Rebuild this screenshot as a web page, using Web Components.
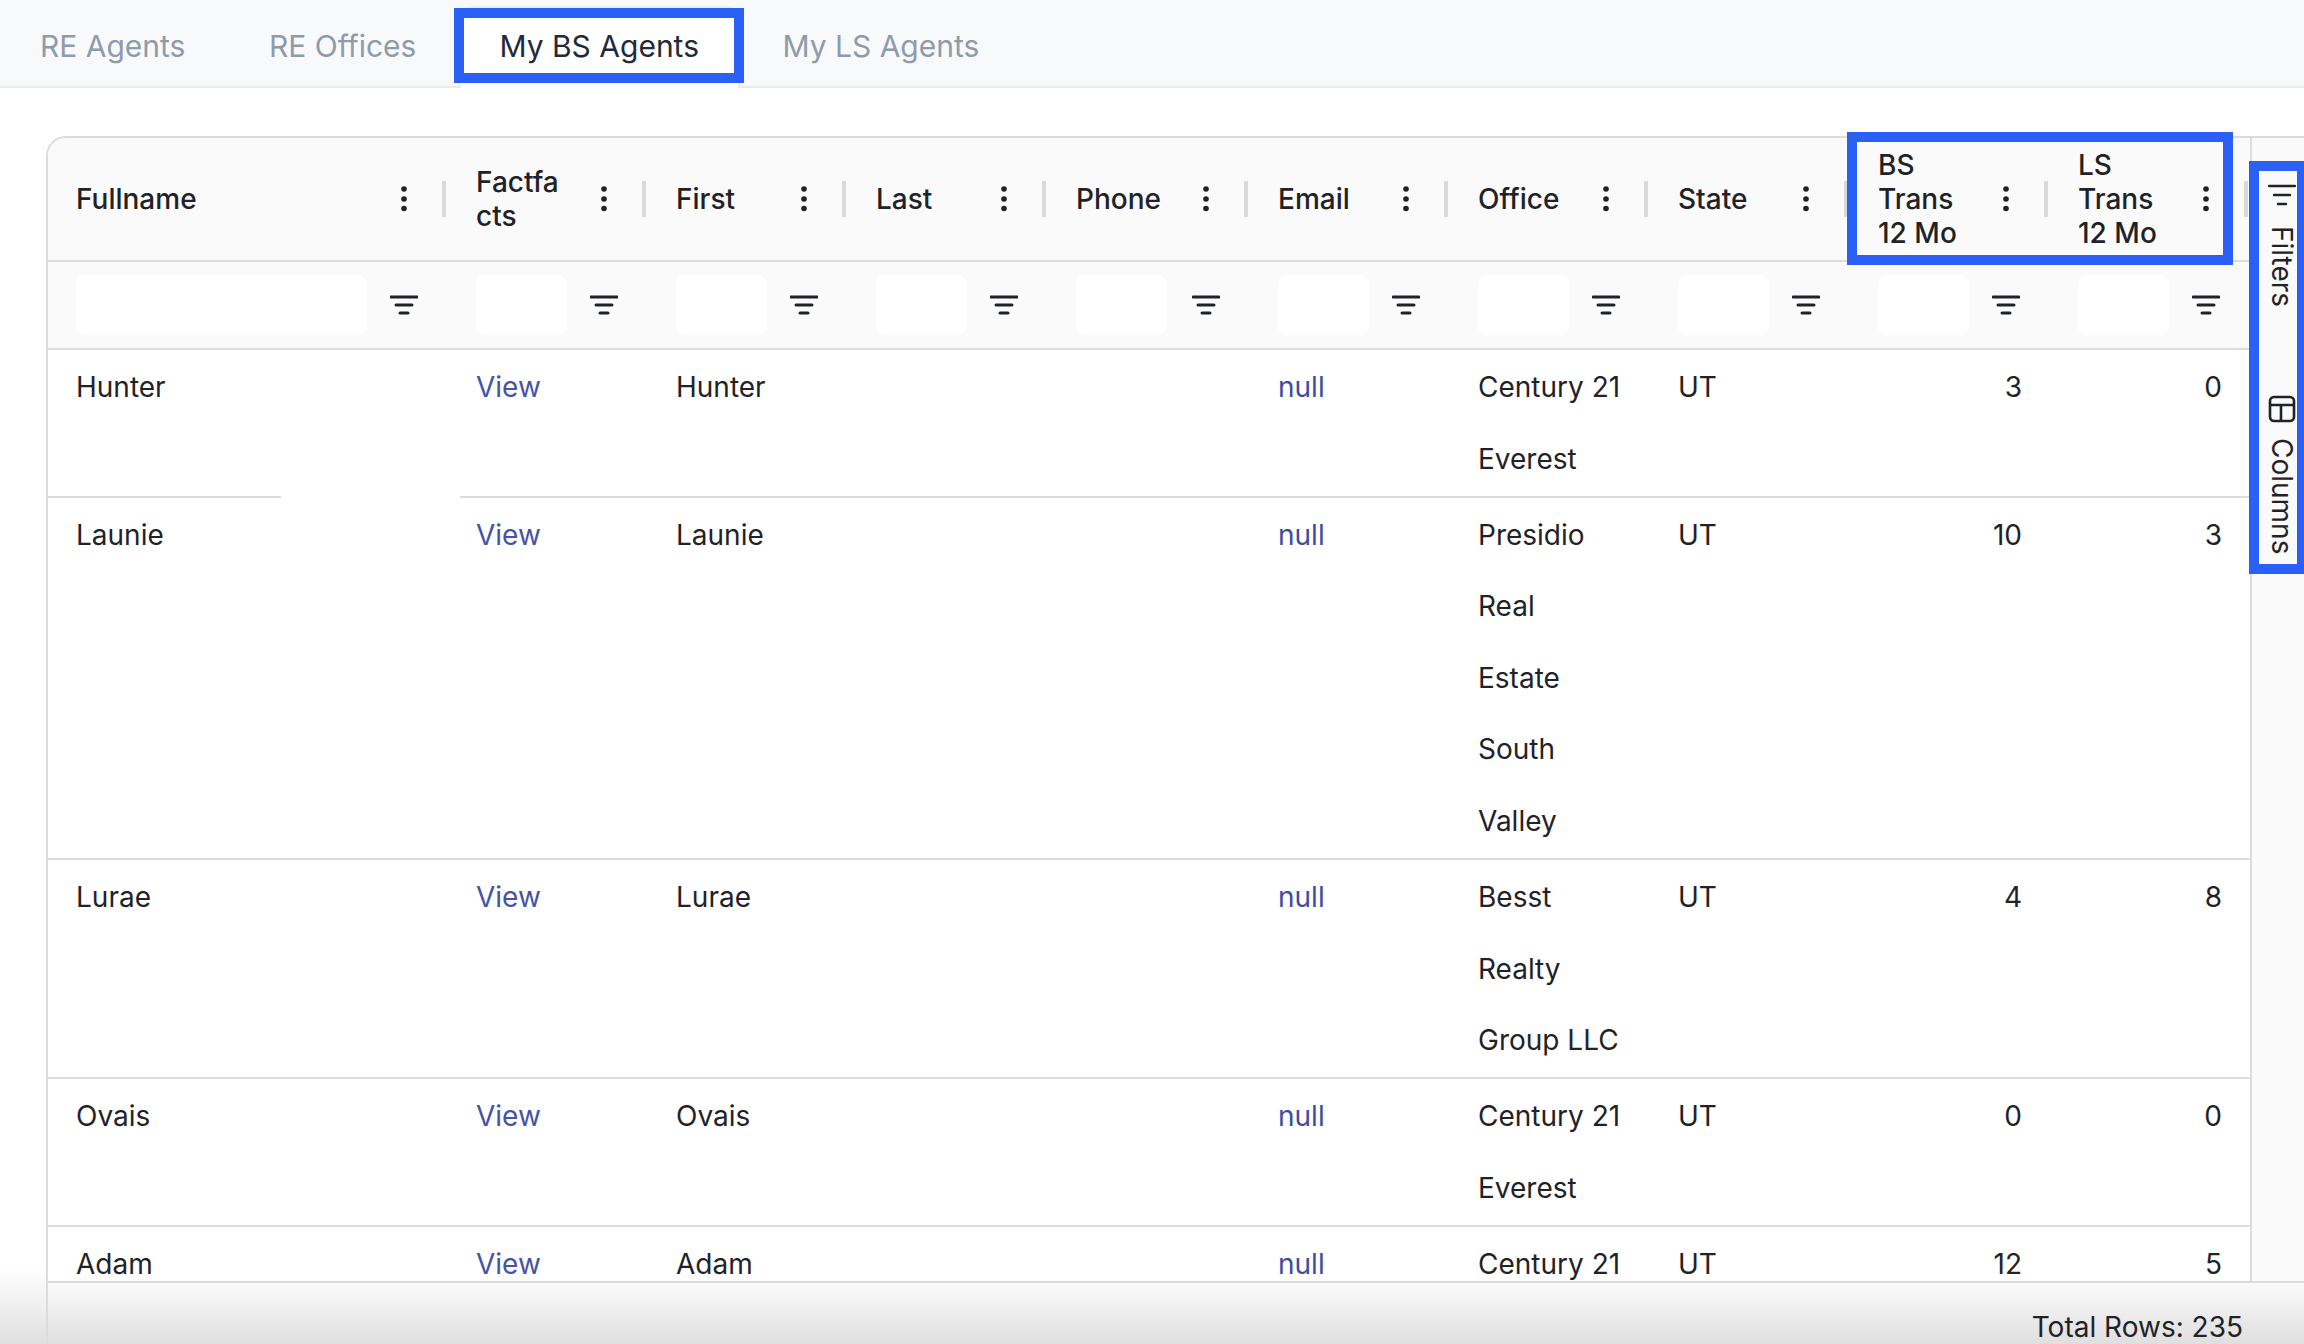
<!DOCTYPE html>
<html lang="en"><head><meta charset="utf-8"><title>My BS Agents</title>
<style>
html,body{margin:0;padding:0;height:1344px;overflow:hidden;background:#fff;font-family:Inter,"Liberation Sans",sans-serif;}
</style></head>
<body>
<agent-app></agent-app>
<script>
const COLS='400px 200px 200px 200px 202px 200px 200px 200px 200px 200px';
const ICON_DOTS='<svg width="8" height="28" viewBox="0 0 8 28"><circle cx="4" cy="4" r="2.8" fill="#1f2328"/><circle cx="4" cy="14" r="2.8" fill="#1f2328"/><circle cx="4" cy="23.5" r="2.8" fill="#1f2328"/></svg>';
const ICON_FILTER='<svg width="28" height="22" viewBox="0 0 28 22"><path d="M1 3H27M6 11H22M10 19H18" stroke="#1f2328" stroke-width="3" stroke-linecap="round" fill="none"/></svg>';

class TabItem extends HTMLElement{
  constructor(){super();this.attachShadow({mode:'open'}).innerHTML=`<style>
  :host{display:flex;align-items:center;box-sizing:border-box;height:100%;padding:0 42.5px;font-size:30px;color:#8f9bab;white-space:nowrap}
  :host([active]){background:#fff;color:#1f2a3a;border:2px solid #eceef2;border-bottom:0;border-radius:14px 14px 0 0;margin-bottom:-2px;height:calc(100% + 2px);padding:0 39px 4px 38.5px}
  </style><span><slot></slot></span>`;}
}
customElements.define('tab-item',TabItem);

class TabBar extends HTMLElement{
  constructor(){super();this.attachShadow({mode:'open'}).innerHTML=`<style>
  :host{display:block;height:88px;box-sizing:border-box;background:#f8f9fb;border-bottom:2px solid #e9ebef;padding-top:6px}
  .row{display:flex;height:80px}
  </style><div class="row"><slot></slot></div>`;}
}
customElements.define('tab-bar',TabBar);

class HeadCell extends HTMLElement{
  constructor(){super();this.attachShadow({mode:'open'}).innerHTML=`<style>
  :host{display:block;position:relative;box-sizing:border-box;height:122px}
  .in{display:flex;align-items:center;height:100%;padding-left:28px;}
  .t{width:91px;font-size:28px;line-height:34px;font-weight:500;color:#1f2328;overflow-wrap:anywhere}
  :host([wide]) .t{width:290px}
  .d{position:absolute;right:40px;top:47px;width:8px;height:28px}
  .sep{position:absolute;right:2px;top:43px;width:4px;height:36px;background:#d9d9d9}
  </style><div class="in"><div class="t"><slot></slot></div></div><div class="d">${ICON_DOTS}</div><div class="sep"></div>`;}
}
customElements.define('head-cell',HeadCell);

class FilterCell extends HTMLElement{
  constructor(){super();this.attachShadow({mode:'open'}).innerHTML=`<style>
  :host{display:block;position:relative;box-sizing:border-box;height:86px;padding:13px 0 0 28px}
  input{display:block;box-sizing:border-box;width:91px;height:60px;border:0;border-radius:9px;background:#fff;padding:0;margin:0;outline:0}
  :host([wide]) input{width:291px}
  .f{position:absolute;right:30px;top:32px;width:28px;height:22px}
  </style><input type="text" aria-label="Filter"><div class="f">${ICON_FILTER}</div>`;}
}
customElements.define('filter-cell',FilterCell);

class GridRow extends HTMLElement{
  constructor(){super();this.attachShadow({mode:'open'});}
  connectedCallback(){
    const d=JSON.parse(this.getAttribute('data'));
    const cells=[
      `<div class="c">${d[0]}</div>`,`<div class="c"><span class="l">View</span></div>`,`<div class="c">${d[0]}</div>`,
      `<div class="c"></div>`,`<div class="c"></div>`,`<div class="c"><span class="n">null</span></div>`,
      `<div class="c o">${d[1]}</div>`,`<div class="c">UT</div>`,`<div class="c r">${d[2]}</div>`,`<div class="c r">${d[3]}</div>`].join('');
    this.shadowRoot.innerHTML=`<style>
    :host{display:grid;grid-template-columns:${COLS};position:relative;box-sizing:border-box;border-bottom:2px solid #dcdcdc;background:#fff;font-size:28px;line-height:71.6px;color:#1f2328}
    .c{padding:2px 28px .4px;box-sizing:border-box;min-width:0}
    .o{padding-right:0;}
    .r{text-align:right}
    .l{color:#4653a5}.n{color:#3f4ba0}
    .gap{position:absolute;left:233px;width:179px;bottom:-2px;height:2px;background:#fff}
    </style>${cells}${this.hasAttribute('gap')?'<div class="gap"></div>':''}`;
  }
}
customElements.define('grid-row',GridRow);

class DataGrid extends HTMLElement{
  constructor(){
    super();
    const heads=['Fullname','Factfacts','First','Last','Phone','Email','Office','State','BS Trans 12 Mo','LS Trans 12 Mo'];
    const rows=[
      ['Hunter','Century 21<br>Everest',3,0],
      ['Launie','Presidio<br>Real<br>Estate<br>South<br>Valley',10,3],
      ['Lurae','Besst<br>Realty<br>Group LLC',4,8],
      ['Ovais','Century 21<br>Everest',0,0],
      ['Adam','Century 21',12,5]];
    const hs=heads.map((h,i)=>`<head-cell ${i?'':'wide'}>${h}</head-cell>`).join('');
    const fs=heads.map((h,i)=>`<filter-cell ${i?'':'wide'}></filter-cell>`).join('');
    const rs=rows.map((r,i)=>`<grid-row ${i==0?'gap':''} data='${JSON.stringify(r)}'></grid-row>`).join('');
    this.attachShadow({mode:'open'}).innerHTML=`<style>
    :host{display:block;flex:none;width:2202px;overflow:hidden;border-right:2px solid #dcdcdc;box-sizing:content-box}
    .h{display:grid;grid-template-columns:${COLS};background:#fafafa;border-bottom:2px solid #dcdcdc}
    </style><div class="h">${hs}</div><div class="h">${fs}</div>${rs}`;
  }
}
customElements.define('data-grid',DataGrid);

class SideBar extends HTMLElement{
  constructor(){super();this.attachShadow({mode:'open'}).innerHTML=`<style>
  :host{display:flex;flex-direction:column;align-items:center;flex:1;background:#fafafa;box-sizing:border-box;padding:46px 7px 0 15px;color:#1f2328;font-size:28px}
  .b{display:flex;flex-direction:column;align-items:center}
  .v{writing-mode:vertical-rl;line-height:30px}
  .b1 .v{margin-top:20px}
  .b2{margin-top:88px}
  .b2 .v{margin-top:15px}
  svg{display:block}
  </style>
  <div class="b b1"><svg width="28" height="22" viewBox="0 0 28 22"><path d="M1 2H27M6 11H22M10 20H18" stroke="#1f2328" stroke-width="2.4" stroke-linecap="round" fill="none"/></svg><div class="v">Filters</div></div>
  <div class="b b2"><svg width="28" height="28" viewBox="0 0 28 28"><rect x="2" y="2" width="24" height="24" rx="4" stroke="#1f2328" stroke-width="2.6" fill="none"/><path d="M2 10H26M13 10V26" stroke="#1f2328" stroke-width="2.6" fill="none"/></svg><div class="v">Columns</div></div>`;}
}
customElements.define('side-bar',SideBar);

class AnnotationBox extends HTMLElement{
  constructor(){super();this.attachShadow({mode:'open'}).innerHTML=`<style>
  :host{display:block;position:absolute;box-sizing:border-box;border:10px solid #2b60f5;pointer-events:none}
  </style>`;}
}
customElements.define('annotation-box',AnnotationBox);

class AgentApp extends HTMLElement{
  constructor(){super();this.attachShadow({mode:'open'}).innerHTML=`<style>
  :host{display:block;position:relative;width:2304px;height:1344px;overflow:hidden;font-family:Inter,"Liberation Sans",sans-serif}
  .main{box-sizing:border-box;height:1256px;padding:48px 0 0 46px;background:linear-gradient(to bottom,#fff 0,#fff 1180px,#dfdfdf 100%)}
  .card{box-sizing:border-box;height:100%;border:2px solid #dcdcdc;border-right:0;border-bottom:0;border-top-left-radius:20px;display:flex;flex-direction:column;overflow:hidden;background:#fff}
  .top{flex:1;min-height:0;display:flex}
  .foot{flex:none;height:63px;box-sizing:border-box;border-top:2px solid #dcdcdc;background:linear-gradient(to bottom,#fafafa,#dfdfdf);display:flex;justify-content:flex-end;padding:27px 61px 0 0;font-size:28px;line-height:34px;color:#1f2328}
  </style>
  <tab-bar><tab-item style="margin-left:-2.5px">RE Agents</tab-item><tab-item style="margin-left:-1.5px">RE Offices</tab-item><tab-item active>My BS Agents</tab-item><tab-item>My LS Agents</tab-item></tab-bar>
  <div class="main"><div class="card"><div class="top"><data-grid></data-grid><side-bar></side-bar></div><div class="foot">Total Rows: 235</div></div></div>
  <annotation-box style="left:454px;top:8px;width:290px;height:75px"></annotation-box>
  <annotation-box style="left:1847px;top:132px;width:386px;height:133px"></annotation-box>
  <annotation-box style="left:2249px;top:161px;width:55px;height:413px;border-right-width:7px"></annotation-box>`;}
}
customElements.define('agent-app',AgentApp);
</script>
</body></html>
